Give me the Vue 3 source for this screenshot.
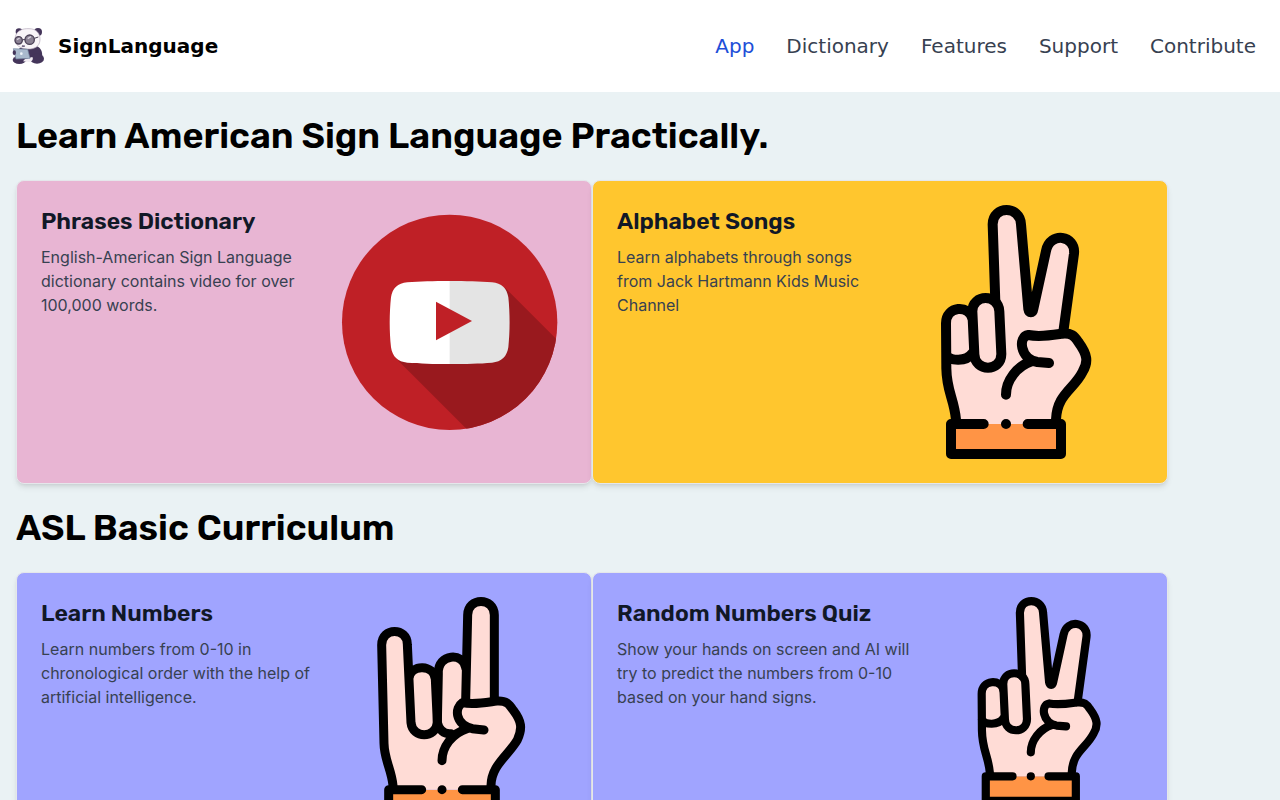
<script setup>
const links = ['App', 'Dictionary', 'Features', 'Support', 'Contribute']

const sections = [
  {
    title: 'Learn American Sign Language Practically.',
    cards: [
      {
        title: 'Phrases Dictionary',
        text: 'English-American Sign Language dictionary contains video for over 100,000 words.',
        tone: 'pink',
        art: 'video',
      },
      {
        title: 'Alphabet Songs',
        text: 'Learn alphabets through songs from Jack Hartmann Kids Music Channel',
        tone: 'yellow',
        art: 'peace',
      },
    ],
  },
  {
    title: 'ASL Basic Curriculum',
    cards: [
      {
        title: 'Learn Numbers',
        text: 'Learn numbers from 0-10 in chronological order with the help of artificial intelligence.',
        tone: 'violet',
        art: 'rock',
      },
      {
        title: 'Random Numbers Quiz',
        text: 'Show your hands on screen and AI will try to predict the numbers from 0-10 based on your hand signs.',
        tone: 'violet',
        art: 'peace',
        compact: true,
      },
    ],
  },
]
</script>

<template>
  <header class="bar">
    <a class="brand" href="#">
      <svg class="logo" viewBox="9 12 120 120" aria-hidden="true">
        <g fill="#44355a">
          <circle cx="42" cy="29" r="10" />
          <circle cx="99" cy="30" r="12" />
          <path d="M44 78C60 70 92 66 104 78C112 88 114 98 108 112L60 118L30 106Z" />
          <ellipse cx="43" cy="114" rx="20" ry="12" />
          <ellipse cx="96" cy="110" rx="21" ry="15" />
        </g>
        <path d="M30 50C32 26 52 19 72 20C94 20 106 34 105 54C104 74 88 82 67 81C46 80 30 70 30 50Z" fill="#f8f4f8" stroke="#b5a9bb" stroke-width="2" />
        <path d="M60 111L82 105C86 110 82 119 72 120L54 118Z" fill="#f2edf3" />
        <circle cx="41" cy="55" r="11" fill="#8a8193" stroke="#4b4157" stroke-width="4" />
        <circle cx="74" cy="53" r="14" fill="#8a8193" stroke="#4b4157" stroke-width="4" />
        <path d="M53 53H60M88 49L100 45" stroke="#443a50" stroke-width="3" />
        <path d="M36 53l8-5M68 50l10-6" stroke="#d5cedb" stroke-width="4" />
        <path d="M51 71Q55 74 59 71" fill="none" stroke="#44355a" stroke-width="4" />
        <path d="M25 80L68 82L75 109L33 111Z" fill="#a9bacd" stroke="#71839d" stroke-width="2" />
        <circle cx="49" cy="95" r="4" fill="#eef5fa" />
        <ellipse cx="28" cy="92" rx="5" ry="7" fill="#44355a" />
      </svg>
      <span>SignLanguage</span>
    </a>
    <nav class="nav" aria-label="Main">
      <a v-for="(link, i) in links" :key="link" href="#" :class="{ active: i === 0 }">{{ link }}</a>
    </nav>
  </header>

  <main class="page">
    <section v-for="section in sections" :key="section.title">
      <h1 class="heading">{{ section.title }}</h1>
      <div class="grid">
        <a v-for="card in section.cards" :key="card.title" href="#" class="card" :class="card.tone">
          <div class="copy">
            <h2>{{ card.title }}</h2>
            <p>{{ card.text }}</p>
          </div>

          <svg v-if="card.art === 'video'" class="art video" viewBox="6 15 705 705" aria-hidden="true">
            <clipPath id="disc"><circle cx="359" cy="367" r="323" /></clipPath>
            <circle cx="359" cy="367" r="323" fill="#bf2026" />
            <path d="M525 263L900 638V900H623L205 482Z" fill="#99191e" clip-path="url(#disc)" />
            <path d="M359 243C310 243 270 244 232 247C203 249 187 266 183 292C178 340 178 395 183 442C187 469 203 486 232 488C270 491 310 492 359 492H366V243Z" fill="#fff" />
            <path d="M359 243C408 243 448 244 486 247C515 249 531 266 535 292C540 340 540 395 535 442C531 469 515 486 486 488C448 491 408 492 359 492Z" fill="#e4e4e4" />
            <path d="M318 305L426 363L318 421Z" fill="#bf2026" />
          </svg>

          <svg v-else-if="card.art === 'peace'" class="art" :class="card.compact ? 'small' : 'large'" viewBox="-123 30 762 762" aria-hidden="true">
            <path d="M63 687H393V777H63Z" fill="#ff9445" />
            <g stroke="#000" stroke-width="30" stroke-linecap="round" stroke-linejoin="round">
              <path stroke="none" fill="#ffdcd6" d="M78 687C72 610 50 590 49 520L48 385C50 340 105 330 127 352C126 300 180 300 196 320L188 90C188 30 270 30 273 88L293 342C296 356 308 356 310 342L348 165C362 110 432 120 432 175L400 416C425 414 432 420 445 441C472 478 476 500 458 530C435 588 380 600 378 687Z" />
              <path fill="none" d="M78 674C72 610 50 590 49 520L48 385C48 332 118 328 128 372M49 480C60 498 108 502 128 474" />
              <path fill="#ffdcd6" d="M127 349C127 296 206 296 208 349L214 477C214 532 134 532 133 477Z" />
              <path fill="none" d="M196 320L188 88C188 31 271 31 273 88L295 342C297 355 308 355 310 342L348 168C360 108 438 121 432 176L400 410" />
              <path fill="none" d="M357 504L322 501C270 492 263 424 295 420C330 427 363 421 397 416C424 414 432 421 445 441C472 478 476 500 458 530C431 584 381 597 378 674M307 498C260 513 228 557 228 599" />
              <path fill="none" d="M161 687H63V777H393V687H293M228 687H228.1" />
            </g>
          </svg>

          <svg v-else class="art rock" viewBox="-90 36 696 696" aria-hidden="true">
            <path d="M71 614H391V718H71Z" fill="#ff9445" />
            <g stroke="#000" stroke-width="27" stroke-linecap="round" stroke-linejoin="round">
              <path stroke="none" fill="#ffdcd6" d="M84 614C82 555 58 525 57 475L50 180C50 125 125 129 127 178L132 270C135 235 204 235 211 275C205 205 285 202 303 240L308 90C308 36 388 36 388 90V348C422 343 432 356 445 376C470 409 473 430 457 465C434 513 382 535 378 614Z" />
              <path fill="none" d="M84 602C80 555 58 525 57 475L50 180C50 126 127 127 127 178L138 413C143 461 212 461 217 413L211 283C208 238 137 236 132 280" />
              <path fill="none" d="M220 265C218 205 296 202 302 248M220 265L217 413C222 434 237 448 258 446" />
              <path fill="none" d="M302 345L308 90C308 36 388 36 388 90V342" />
              <path fill="#ffdcd6" d="M357 435L322 431C267 416 270 368 292 353C328 360 360 353 395 348C424 346 432 356 445 376C470 409 473 430 457 465C429 513 379 540 378 602" />
              <path fill="none" d="M308 430C260 445 231 487 231 527" />
              <path fill="none" d="M170 614H71V718H391V614H292M231 614H231.1" />
            </g>
          </svg>
        </a>
      </div>
    </section>
  </main>
</template>

<style>
body {
  margin: 0;
  background: #eaf2f4;
}
</style>

<style scoped>
* {
  box-sizing: border-box;
}

a {
  color: inherit;
  text-decoration: none;
}

.bar {
  display: flex;
  align-items: center;
  justify-content: space-between;
  padding: 26px 24px 26px 8px;
  background: #fff;
  font-family: "DejaVu Sans", sans-serif;
  font-size: 20px;
  line-height: 28px;
}

.brand {
  display: flex;
  align-items: center;
  gap: 10px;
  color: #000;
  font-weight: 700;
}

.logo {
  width: 40px;
  height: 40px;
}

.nav {
  display: flex;
  gap: 32px;
  color: #374151;
}

.nav .active {
  color: #1d4ed8;
}

.page {
  padding: 0 16px;
  font-family: Inter, sans-serif;
}

.heading {
  margin: 0;
  padding: 24px 0;
  color: #000;
  font-family: Rubik, Inter, sans-serif;
  font-size: 36px;
  font-weight: 600;
  line-height: 40px;
}

.grid {
  display: grid;
  grid-template-columns: repeat(2, minmax(0, 1fr));
  max-width: 1152px;
}

.card {
  display: flex;
  align-items: flex-start;
  padding: 24px;
  border: 1px solid #e5e7eb;
  border-radius: 8px;
  box-shadow: 0 4px 6px -1px rgb(0 0 0 / 10%), 0 2px 4px -2px rgb(0 0 0 / 10%);
}

.pink {
  background: #e8b5d3;
}

.yellow {
  background: #ffc62e;
}

.violet {
  background: #a0a4ff;
}

.copy {
  flex: 1;
  min-width: 0;
  padding-right: 16px;
}

.copy h2 {
  margin: 0 0 8px;
  color: #111827;
  font-family: Rubik, Inter, sans-serif;
  font-size: 23px;
  font-weight: 600;
  line-height: 32px;
}

.copy p {
  margin: 0;
  color: #374151;
  font-size: 16px;
  line-height: 24px;
}

.art {
  flex: none;
  display: block;
  aspect-ratio: 1;
}

.video {
  width: 235px;
}

.large {
  width: 254px;
}

.rock {
  width: 232px;
}

.small {
  width: 208px;
}
</style>
